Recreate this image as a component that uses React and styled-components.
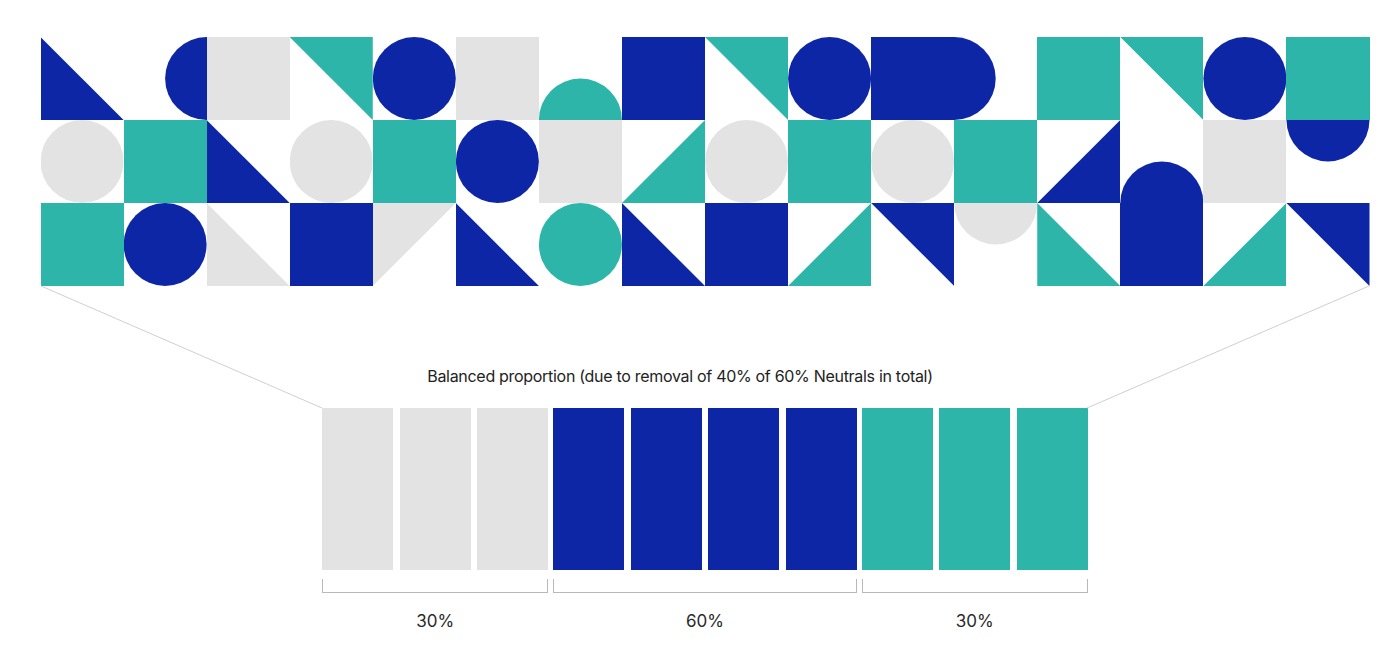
import React from "react";
import styled, { createGlobalStyle } from "styled-components";

const BLUE = "#0c26a6";
const TEAL = "#2db5a9";
const GREY = "#e3e3e3";

const GlobalStyle = createGlobalStyle`
  body {
    margin: 0;
    background: #ffffff;
    font-family: Inter, "Liberation Sans", sans-serif;
    color: #222222;
  }
`;

// clip shapes for one pattern tile
const clips = {
  sq: "none",
  ci: "circle(50% at 50% 50%)",
  dome: "circle(50% at 50% 100%)",
  bowl: "circle(50% at 50% 0%)",
  hr: "circle(50% at 100% 50%)",
  hl: "circle(50% at 0% 50%)",
  bl: "polygon(0 0, 0 100%, 100% 100%)",
  tr: "polygon(0 0, 100% 0, 100% 100%)",
  br: "polygon(100% 0, 100% 100%, 0 100%)",
  tl: "polygon(0 0, 100% 0, 0 100%)",
};

const B = BLUE;
const T = TEAL;
const G = GREY;

const pattern = [
  [[B, "bl"], [B, "hr"], [G, "sq"], [T, "tr"], [B, "ci"], [G, "sq"], [T, "dome"], [B, "sq"],
   [T, "tr"], [B, "ci"], [B, "sq"], [B, "hl"], [T, "sq"], [T, "tr"], [B, "ci"], [T, "sq"]],
  [[G, "ci"], [T, "sq"], [B, "bl"], [G, "ci"], [T, "sq"], [B, "ci"], [G, "sq"], [T, "br"],
   [G, "ci"], [T, "sq"], [G, "ci"], [T, "sq"], [B, "br"], [B, "dome"], [G, "sq"], [B, "bowl"]],
  [[T, "sq"], [B, "ci"], [G, "bl"], [B, "sq"], [G, "tl"], [B, "bl"], [T, "ci"], [B, "bl"],
   [B, "sq"], [T, "br"], [B, "tr"], [G, "bowl"], [T, "bl"], [B, "sq"], [T, "br"], [B, "tr"]],
];

const groups = [
  { color: GREY, count: 3, label: "30%" },
  { color: BLUE, count: 4, label: "60%" },
  { color: TEAL, count: 3, label: "30%" },
];

const Page = styled.div`
  position: relative;
  width: 1400px;
  height: 647px;
  padding: 37px 0 0 10px;
  box-sizing: border-box;
  display: flex;
  flex-direction: column;
  align-items: center;
  overflow: hidden;
`;

const Pattern = styled.div`
  width: 1329px;
  height: 249px;
  display: grid;
  grid-template-columns: repeat(16, 1fr);
  grid-template-rows: repeat(3, 1fr);
`;

const Tile = styled.div`
  background: ${(p) => p.$color};
  clip-path: ${(p) => clips[p.$kind]};
`;

const Connectors = styled.svg`
  position: absolute;
  left: 0;
  top: 0;
  pointer-events: none;
`;

const Caption = styled.div`
  margin: 80px 50px 0 0;
  font-size: 16px;
  line-height: 20px;
  font-weight: 400;
  letter-spacing: -0.3px;
  color: #222222;
`;

const Chart = styled.div`
  margin-top: 22px;
  display: flex;
  gap: 5px;
`;

const Group = styled.div`
  display: flex;
  flex-direction: column;
  align-items: stretch;
`;

const Bars = styled.div`
  display: flex;
  gap: 6.5px;
`;

const Bar = styled.div`
  width: 71px;
  height: 162px;
  background: ${(p) => p.$color};
`;

const Bracket = styled.div`
  margin-top: 9px;
  height: 13px;
  border: 1.5px solid #b9b9b9;
  border-top: none;
`;

const Label = styled.div`
  margin-top: 18px;
  text-align: center;
  font-size: 17px;
  line-height: 20px;
  color: #2a2a2a;
`;

export default function App() {
  return (
    <>
      <GlobalStyle />
      <Page>
        <Pattern>
          {pattern.flat().map(([color, kind], i) => (
            <Tile key={i} $color={color} $kind={kind} />
          ))}
        </Pattern>
        <Caption>
          Balanced proportion (due to removal of 40% of 60% Neutrals in total)
        </Caption>
        <Chart>
          {groups.map((g, i) => (
            <Group key={i}>
              <Bars>
                {Array.from({ length: g.count }).map((_, j) => (
                  <Bar key={j} $color={g.color} />
                ))}
              </Bars>
              <Bracket />
              <Label>{g.label}</Label>
            </Group>
          ))}
        </Chart>
        <Connectors width="1400" height="647">
          <line x1="41" y1="286" x2="322" y2="408" stroke="#cfcfcf" strokeWidth="1" />
          <line x1="1369" y1="286" x2="1087" y2="408" stroke="#cfcfcf" strokeWidth="1" />
        </Connectors>
      </Page>
    </>
  );
}
